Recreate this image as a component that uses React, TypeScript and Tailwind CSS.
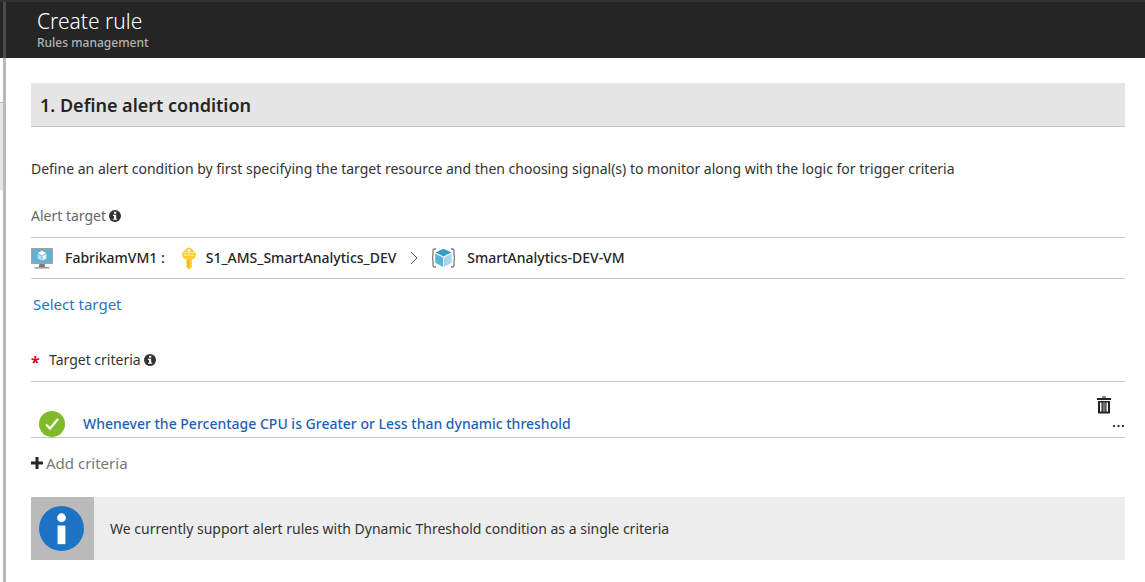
import type { ReactNode } from "react";

function InfoDot() {
  return (
    <svg viewBox="0 0 12 12" className="size-3 shrink-0" aria-hidden="true">
      <circle cx="6" cy="6" r="6" fill="#333" />
      <rect x="5" y="1.8" width="2.2" height="1.9" fill="#fff" />
      <path d="M4 4.8h3.2v3.9H8.2v1.1H4V8.7h1V5.9H4z" fill="#fff" />
    </svg>
  );
}

function VmIcon() {
  return (
    <svg viewBox="0 0 22 22" className="h-[22px] w-[22px] shrink-0" aria-hidden="true">
      <rect x="0" y="1" width="22" height="16" rx="0.8" fill="#a0a1a2" />
      <rect x="1.6" y="2.600" width="18.8" height="12.800" fill="#59b4d9" />
      <path d="M8.500 17h5l.8 3H7.700z" fill="#7a7a7a" />
      <rect x="3.500" y="20" width="15" height="1.600" fill="#a0a1a2" />
      <path d="M11 3.700l4.200 2.400L11 8.500 6.800 6.100z" fill="#fff" />
      <path d="M6.600 6.800l4 2.300v4.700l-4-2.300z" fill="#b8e0f0" />
      <path d="M15.400 6.800l-4 2.300v4.700l4-2.300z" fill="#e3f3fa" />
    </svg>
  );
}

function KeyIcon() {
  return (
    <svg viewBox="0 0 16 23" className="h-[23px] w-4 shrink-0" aria-hidden="true">
      <path
        d="M8 .5c1.600 0 2.500.8 3.500 1.900l3 3c.6.6.8 1.300.5 2.100l-1.200 3.200c-.3.700-.8 1.100-1.500 1.300L11 12.400v1.400l-.7.9.7 1v1.100l-.7.9.7 1v1.300L8 22.700 5.300 20v-7.600L3.700 12c-.7-.2-1.200-.6-1.500-1.300L1 7.500c-.3-.8-.1-1.500.5-2.100l3-3C5.500 1.300 6.400.5 8 .5z"
        fill="#fcce30"
      />
      <path d="M1.200 5.700h13.600M3 8.300h10" stroke="#fff3b8" strokeWidth="0.8" />
      <path d="M7.200 12.500v7.500" stroke="#e8ac20" strokeWidth="1" />
      <circle cx="8" cy="3.600" r="1.400" fill="#fff" />
    </svg>
  );
}

function ResourceGroupIcon() {
  return (
    <svg viewBox="0 0 23 20" className="h-5 w-[23px] shrink-0" aria-hidden="true">
      <path
        d="M4 1H2.500Q1 1 1 2.500V7L.4 10 1 13v4.500Q1 19 2.500 19H4M19 1h1.500Q22 1 22 2.500V7l.6 3-.6 3v4.500Q22 19 20.500 19H19"
        fill="none"
        stroke="#7a7a7a"
        strokeWidth="1.300"
      />
      <path d="M11.500 .8l8 3.700-8 3.900-8-3.900z" fill="#3999c6" />
      <path d="M3.200 5.500l7.900 3.900v9.500l-7.900-4.200z" fill="#59b4d9" />
      <path d="M19.800 5.500l-7.900 3.900v9.500l7.900-4.200z" fill="#a5d8ec" />
    </svg>
  );
}

function TrashIcon() {
  return (
    <svg viewBox="0 0 14 18" className="block h-[18px] w-3.5" aria-hidden="true">
      <rect x="5" y="0" width="4" height="2" fill="#888" />
      <rect x="0" y="2" width="14" height="2" fill="#222" />
      <path d="M1 5h12v12.500H1z" fill="#222" />
      <path d="M3 6.500h1.500v9H3zM9.500 6.500H11v9H9.500z" fill="#fff" />
      <path d="M5.800 6.500H8.300v9H5.800z" fill="#ccc" />
      <path d="M6.500 6.500h1v9h-1z" fill="#222" />
    </svg>
  );
}

function Crumb({ icon, children }: { icon: ReactNode; children: ReactNode }) {
  return (
    <span className="flex items-center gap-3">
      {icon}
      <span>{children}</span>
    </span>
  );
}

export default function App() {
  return (
    <div className="flex min-h-screen flex-col bg-white font-['Noto_Sans','Open_Sans',sans-serif] text-sm text-[#333]">
      <header className="flex h-[58px] border-t-2 border-[#333] bg-[#252525]">
        <div className="ml-[3px] w-[3px] bg-[#4a4a4a]" />
        <div className="flex flex-col pt-[5px] pl-[31px]">
          <h1 className="text-[21px] leading-7 font-light text-white">Create rule</h1>
          <p className="text-xs leading-4 font-medium text-[#b4b4b4]">Rules management</p>
        </div>
      </header>

      <div className="flex grow">
        <div className="w-[3px] pt-11">
          <div className="h-[88px] border-t border-[#bbb] bg-[#e5e5e5]" />
        </div>
        <div className="w-[3px] bg-[#b9b9b9]" />
        <main className="min-w-0 grow pt-[25px] pr-5 pl-[25px]">
          <h2 className="flex h-11 items-center border-b border-[#c8c8c8] bg-[#e5e5e5] pl-[9px] text-lg font-semibold text-[#252525]">
            1. Define alert condition
          </h2>

          <p className="mt-8 leading-5">
            Define an alert condition by first specifying the target resource and then choosing signal(s) to
            monitor along with the logic for trigger criteria
          </p>

          <section>
            <h3 className="mt-[27px] flex items-center gap-[3px] leading-5 text-[#666]">
              Alert target <InfoDot />
            </h3>
            <div className="mt-[11px] flex h-[42px] items-center border-y border-[#c8c8c8] font-medium text-[#252525]">
              <Crumb icon={<VmIcon />}>FabrikamVM1 :</Crumb>
              <span className="w-4" />
              <span className="flex items-center gap-[9px]">
                <KeyIcon />
                <span>S1_AMS_SmartAnalytics_DEV</span>
              </span>
              <svg viewBox="0 0 8 14" className="mx-3.5 h-3.5 w-2" aria-hidden="true">
                <path d="M1 1l6 6-6 6" fill="none" stroke="#555" />
              </svg>
              <Crumb icon={<ResourceGroupIcon />}>SmartAnalytics-DEV-VM</Crumb>
            </div>
            <a href="#target" className="mt-[15px] ml-0.5 block w-fit text-[15px] leading-5 text-[#1f76c9]">
              Select target
            </a>
          </section>

          <section>
            <h3 className="mt-9 flex items-center leading-5">
              <span className="w-[18px] pt-1 text-base leading-4 font-bold text-[#e3002b]">*</span>
              <span className="mr-[3px]">Target criteria</span>
              <InfoDot />
            </h3>
            <div className="mt-[11px] flex h-[57px] items-end justify-between border-y border-[#c8c8c8]">
              <div className="flex items-center gap-[18px] pl-2">
                <svg viewBox="0 0 26 26" className="size-[26px]" aria-hidden="true">
                  <circle cx="13" cy="13" r="13" fill="#7fba2a" />
                  <path d="M7 13.500l4 4L19 8" fill="none" stroke="#fff" strokeWidth="2.200" />
                </svg>
                <a href="#criteria" className="font-medium text-[#1f5fb5]">
                  Whenever the Percentage CPU is Greater or Less than dynamic threshold
                </a>
              </div>
              <div className="flex flex-col items-end gap-2.5 pb-[9px]">
                <button type="button" aria-label="Delete criteria" className="mr-3.5">
                  <TrashIcon />
                </button>
                <button type="button" aria-label="More actions" className="mr-px">
                  <svg viewBox="0 0 11 4" className="block h-1 w-[11px]" aria-hidden="true">
                    <path d="M0 1h2v2H0zM4.500 1h2v2h-2zM9 1h2v2H9z" fill="#333" />
                  </svg>
                </button>
              </div>
            </div>
            <button type="button" className="mt-[15px] flex items-center gap-[3px] text-[15px] leading-5 text-[#777]">
              <svg viewBox="0 0 12 12" className="size-3" aria-hidden="true">
                <path d="M6 0v12M0 6h12" stroke="#252525" strokeWidth="3" />
              </svg>
              Add criteria
            </button>
          </section>

          <div role="note" className="mt-6 flex items-center gap-4 bg-[#ededed]">
            <div className="flex h-[63px] w-[63px] items-center bg-[#bababa] pl-2">
              <svg viewBox="0 0 46 46" className="size-[45px]" aria-hidden="true">
                <circle cx="23" cy="23" r="23" fill="#1e73c5" />
                <circle cx="23" cy="12" r="4.500" fill="#fff" />
                <rect x="19" y="20" width="8" height="19" fill="#fff" />
              </svg>
            </div>
            <p>We currently support alert rules with Dynamic Threshold condition as a single criteria</p>
          </div>
        </main>
      </div>
    </div>
  );
}
